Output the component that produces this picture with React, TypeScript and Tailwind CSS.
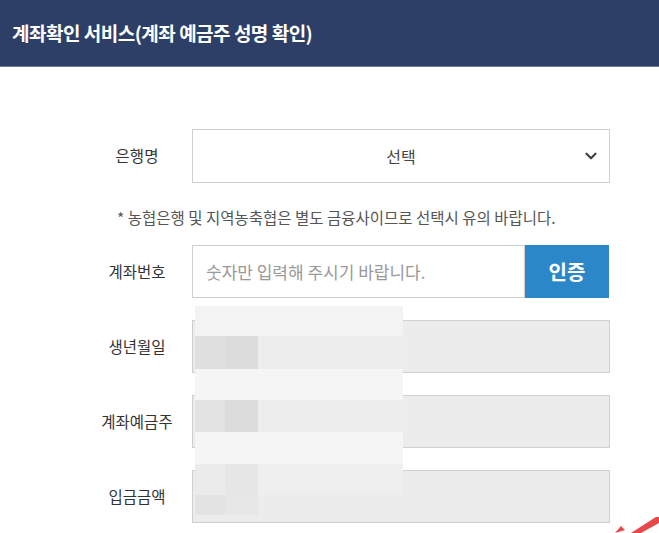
import { ChevronDown } from 'lucide-react';

const font = { fontFamily: '"Noto Sans CJK KR", "Noto Sans", sans-serif' };

function Row({ label, children }: { label: string; children: React.ReactNode }) {
  return (
    <div className="flex items-center">
      <div className="w-[110px] text-center text-[15.5px] text-[#333]">{label}</div>
      {children}
    </div>
  );
}

function ReadonlyField() {
  return <div className="h-[53px] w-[418px] border border-[#cfcfcf] bg-[#ececec]" />;
}

// mosaic blur over the personal fields
function Mosaic() {
  return (
    <div className="absolute left-[195px] top-[306px] flex w-[208px] flex-col">
      <div className="h-[30px] bg-[#f3f3f3]" />
      <div className="flex h-[33px]">
        <div className="w-[30px] bg-[#dfdfdf]" />
        <div className="w-[33px] bg-[#dcdcdc]" />
        <div className="flex-1 bg-[#ededed]" />
      </div>
      <div className="h-[31px] bg-[#f5f5f5]" />
      <div className="flex h-[32px]">
        <div className="w-[30px] bg-[#e3e3e3]" />
        <div className="w-[33px] bg-[#dcdcdc]" />
        <div className="flex-1 bg-[#ededed]" />
      </div>
      <div className="h-[32px] bg-[#f5f5f5]" />
      <div className="flex h-[31px]">
        <div className="w-[30px] bg-[#ebebeb]" />
        <div className="w-[33px] bg-[#e6e6e6]" />
        <div className="flex-1 bg-[#efefef]" />
      </div>
      <div className="flex h-[20px]">
        <div className="w-[30px] bg-[#e3e3e3]" />
        <div className="w-[33px] bg-[#e7e7e7]" />
      </div>
    </div>
  );
}

export default function App() {
  return (
    <div className="relative h-[533px] w-[659px] overflow-hidden bg-white" style={font}>
      <div className="flex h-[67px] items-center border-b border-[#6b7896] bg-[#2d3f67] pl-[12px]">
        <span className="text-[19px] font-bold tracking-[-0.5px] text-white">계좌확인 서비스(계좌 예금주 성명 확인)</span>
      </div>

      <div className="flex flex-col pl-[82px] pt-[62px]">
        <Row label="은행명">
          <div className="relative flex h-[54px] w-[418px] items-center justify-center border border-[#cfcfcf] bg-white">
            <span className="text-[16px] text-[#444]">선택</span>
            <ChevronDown className="absolute right-[9px] h-[18px] w-[18px] text-[#444]" strokeWidth={3} />
          </div>
        </Row>

        <p className="mt-[22px] pl-[35px] text-[15.5px] leading-[24px] text-[#555]">
          * 농협은행 및 지역농축협은 별도 금융사이므로 선택시 유의 바랍니다.
        </p>

        <div className="mt-[16px]">
          <Row label="계좌번호">
            <div className="flex h-[53px] w-[417px]">
              <div className="flex flex-1 items-center border border-[#cfcfcf] pl-[13px] text-[17px] text-[#999]">
                숫자만 입력해 주시기 바랍니다.
              </div>
              <button className="w-[84px] bg-[#2b87c8] text-[20px] font-bold text-white">인증</button>
            </div>
          </Row>
        </div>

        <div className="mt-[22px] flex flex-col gap-[22px]">
          <Row label="생년월일">
            <ReadonlyField />
          </Row>
          <Row label="계좌예금주">
            <ReadonlyField />
          </Row>
          <Row label="입금금액">
            <ReadonlyField />
          </Row>
        </div>
      </div>

      <Mosaic />

      <svg className="absolute bottom-0 right-0" width="48" height="16" viewBox="0 0 48 16">
        <path d="M4 16 L10 9 L14 13 Z" fill="#e8474a" />
        <path d="M20 16 L48 -2 L48 6 L30 16 Z" fill="#e8474a" />
      </svg>
    </div>
  );
}
